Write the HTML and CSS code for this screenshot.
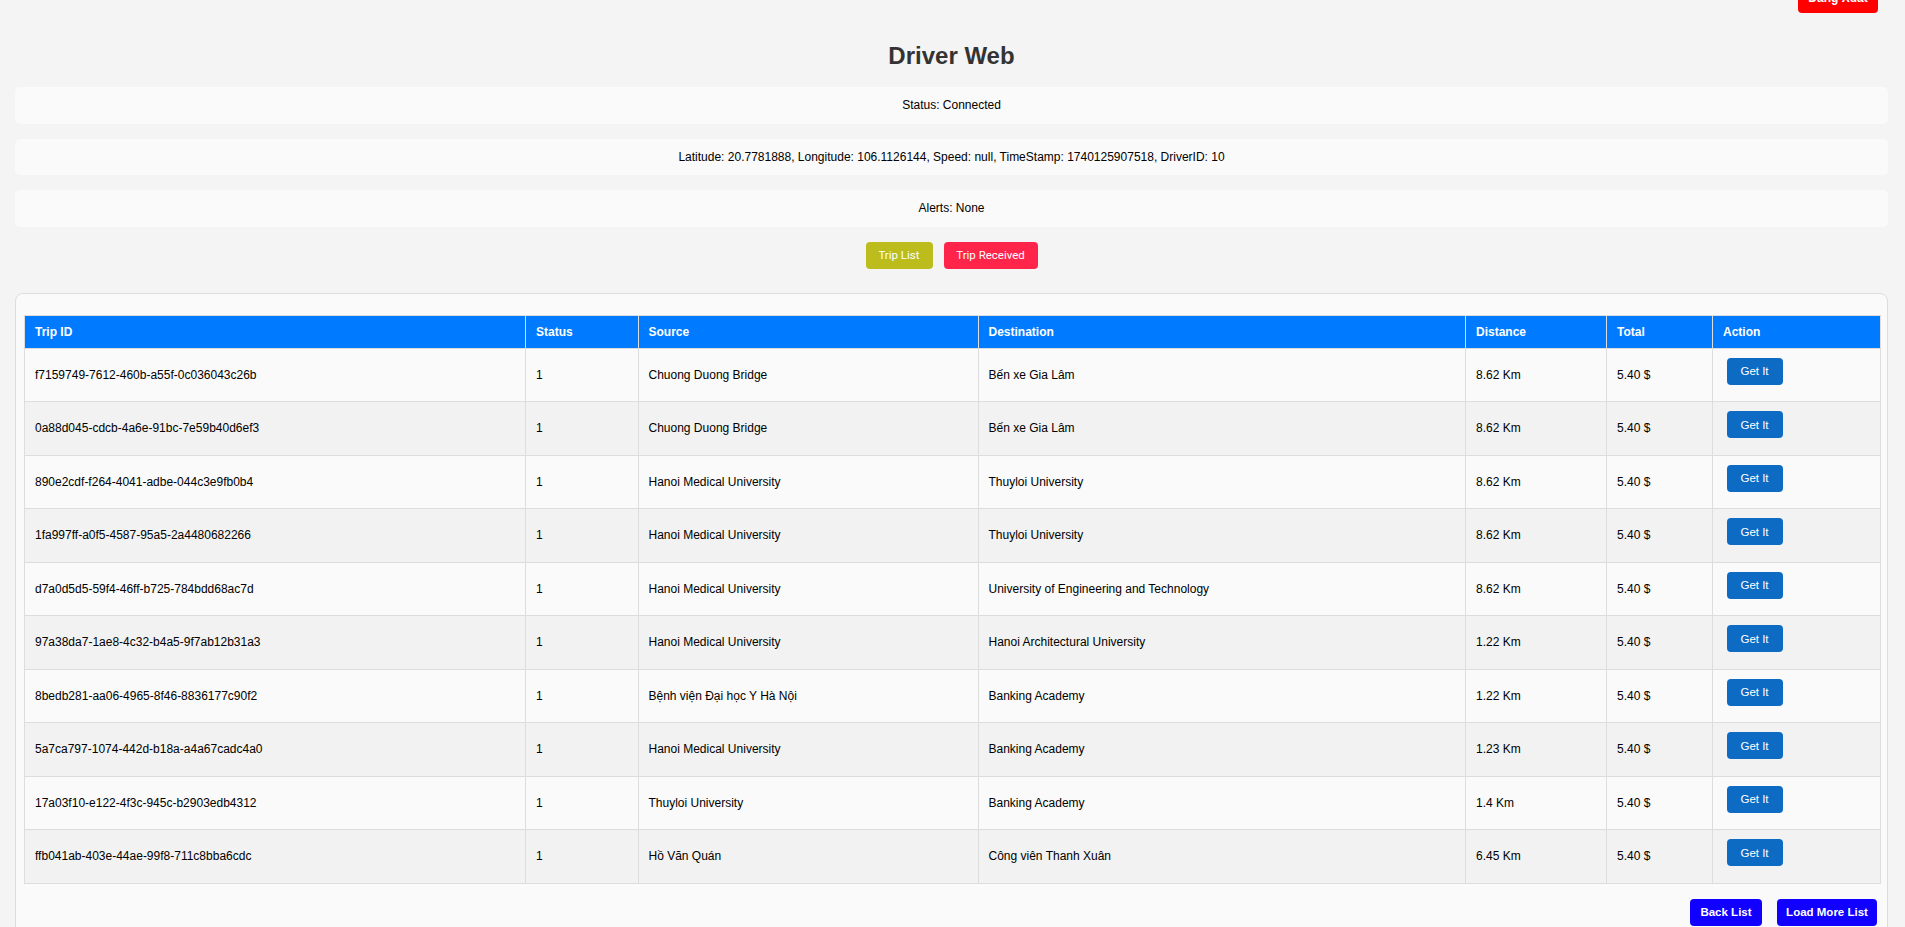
FILE: index.html
```html
<!DOCTYPE html>
<html lang="vi">
<head>
<meta charset="utf-8">
<title>Driver Web</title>
<link rel="stylesheet" href="styles.css">
</head>
<body>
<div class="page">
  <div class="topbar">
    <button class="btn-logout">Đăng Xuất</button>
  </div>
  <h1 class="title">Driver Web</h1>
  <div class="info-box">Status: Connected</div>
  <div class="info-box">Latitude: 20.7781888, Longitude: 106.1126144, Speed: null, TimeStamp: 1740125907518, DriverID: 10</div>
  <div class="info-box">Alerts: None</div>
  <div class="tabs">
    <button class="tab tab-list">Trip List</button>
    <button class="tab tab-received">Trip Received</button>
  </div>
  <div class="card">
    <table class="trips">
      <colgroup>
        <col class="c-id"><col class="c-status"><col class="c-src"><col class="c-dst"><col class="c-dist"><col class="c-total"><col class="c-action">
      </colgroup>
      <thead>
        <tr><th>Trip ID</th><th>Status</th><th>Source</th><th>Destination</th><th>Distance</th><th>Total</th><th>Action</th></tr>
      </thead>
      <tbody>
        <tr><td>f7159749-7612-460b-a55f-0c036043c26b</td><td>1</td><td>Chuong Duong Bridge</td><td>Bến xe Gia Lâm</td><td>8.62 Km</td><td>5.40 $</td><td class="act"><button class="btn-get">Get It</button></td></tr>
        <tr><td>0a88d045-cdcb-4a6e-91bc-7e59b40d6ef3</td><td>1</td><td>Chuong Duong Bridge</td><td>Bến xe Gia Lâm</td><td>8.62 Km</td><td>5.40 $</td><td class="act"><button class="btn-get">Get It</button></td></tr>
        <tr><td>890e2cdf-f264-4041-adbe-044c3e9fb0b4</td><td>1</td><td>Hanoi Medical University</td><td>Thuyloi University</td><td>8.62 Km</td><td>5.40 $</td><td class="act"><button class="btn-get">Get It</button></td></tr>
        <tr><td>1fa997ff-a0f5-4587-95a5-2a4480682266</td><td>1</td><td>Hanoi Medical University</td><td>Thuyloi University</td><td>8.62 Km</td><td>5.40 $</td><td class="act"><button class="btn-get">Get It</button></td></tr>
        <tr><td>d7a0d5d5-59f4-46ff-b725-784bdd68ac7d</td><td>1</td><td>Hanoi Medical University</td><td>University of Engineering and Technology</td><td>8.62 Km</td><td>5.40 $</td><td class="act"><button class="btn-get">Get It</button></td></tr>
        <tr><td>97a38da7-1ae8-4c32-b4a5-9f7ab12b31a3</td><td>1</td><td>Hanoi Medical University</td><td>Hanoi Architectural University</td><td>1.22 Km</td><td>5.40 $</td><td class="act"><button class="btn-get">Get It</button></td></tr>
        <tr><td>8bedb281-aa06-4965-8f46-8836177c90f2</td><td>1</td><td>Bệnh viện Đại học Y Hà Nội</td><td>Banking Academy</td><td>1.22 Km</td><td>5.40 $</td><td class="act"><button class="btn-get">Get It</button></td></tr>
        <tr><td>5a7ca797-1074-442d-b18a-a4a67cadc4a0</td><td>1</td><td>Hanoi Medical University</td><td>Banking Academy</td><td>1.23 Km</td><td>5.40 $</td><td class="act"><button class="btn-get">Get It</button></td></tr>
        <tr><td>17a03f10-e122-4f3c-945c-b2903edb4312</td><td>1</td><td>Thuyloi University</td><td>Banking Academy</td><td>1.4 Km</td><td>5.40 $</td><td class="act"><button class="btn-get">Get It</button></td></tr>
        <tr><td>ffb041ab-403e-44ae-99f8-711c8bba6cdc</td><td>1</td><td>Hồ Văn Quán</td><td>Công viên Thanh Xuân</td><td>6.45 Km</td><td>5.40 $</td><td class="act"><button class="btn-get">Get It</button></td></tr>
      </tbody>
    </table>
    <div class="pager">
      <button class="btn-page">Back List</button>
      <button class="btn-page btn-more">Load More List</button>
    </div>
  </div>
</div>
</body>
</html>
```

FILE: styles.css
```css
* { box-sizing: border-box; }
html, body { margin: 0; padding: 0; }
body {
  background: #f4f4f4;
  font-family: "Liberation Sans", Arial, sans-serif;
  color: #000;
  font-size: 12px;
  overflow: hidden;
}
.page {
  padding: 0 17px 0 15px;
}
.topbar {
  display: flex;
  justify-content: flex-end;
  padding-right: 10px;
  margin-top: -17px;
  height: 30px;
}
.btn-logout {
  width: 80px;
  height: 30px;
  background: #ff0000;
  color: #fff;
  border: none;
  border-radius: 4px;
  font-family: "Liberation Sans", Arial, sans-serif;
  font-size: 12px;
  font-weight: bold;
}
.title {
  margin: 0;
  height: 74px;
  padding-top: 29px;
  text-align: center;
  font-size: 24px;
  font-weight: bold;
  color: #333;
  line-height: 28px;
}
.info-box {
  background: #fafafa;
  border-radius: 5px;
  height: 36.5px;
  line-height: 36.5px;
  text-align: center;
  font-size: 12px;
  margin-bottom: 15px;
}
.tabs {
  display: flex;
  justify-content: center;
  gap: 11px;
  margin-bottom: 24px;
}
.tab {
  height: 27px;
  border: none;
  border-radius: 4px;
  color: #fff;
  font-family: Roboto, "Liberation Sans", sans-serif;
  font-size: 11.5px;
  font-weight: 400;
  padding: 0;
}
.tab-list { width: 67px; background: #bcbc1c; }
.tab-received { width: 94px; background: #ff2449; }
.card {
  background: #fafafa;
  border: 1px solid #dddddd;
  border-radius: 8px;
  padding: 21px 7px 0 8px;
  height: 700px;
}
.trips {
  width: 1855.5px;
  border-collapse: collapse;
  table-layout: fixed;
}
.c-id { width: 501px; }
.c-status { width: 112.5px; }
.c-src { width: 340px; }
.c-dst { width: 487.5px; }
.c-dist { width: 141px; }
.c-total { width: 106px; }
.c-action { width: 167.5px; }
.trips th {
  background: #007bff;
  color: #fff;
  font-weight: bold;
  text-align: left;
  height: 33px;
  padding: 0 10px;
  border: 1px solid #dddddd;
  font-size: 12px;
}
.trips td {
  height: 53.5px;
  padding: 0 10px;
  border: 1px solid #dddddd;
  vertical-align: middle;
  font-size: 12px;
}
.trips tbody tr:nth-child(odd) td { background: #fafafa; }
.trips tbody tr:nth-child(even) td { background: #f2f2f2; }
.trips td.act {
  vertical-align: top;
  padding-top: 9px;
}
.btn-get {
  width: 56px;
  height: 27px;
  margin-left: 3.5px;
  background: #0d6bc4;
  color: #fff;
  border: none;
  border-radius: 4px;
  font-family: "Liberation Sans", Arial, sans-serif;
  font-size: 11.5px;
  padding: 0;
}
.pager {
  display: flex;
  justify-content: flex-end;
  gap: 15px;
  margin-top: 15px;
  padding-right: 3px;
}
.btn-page {
  width: 72px;
  height: 27px;
  background: #1100ff;
  color: #fff;
  border: none;
  border-radius: 4px;
  font-family: "Liberation Sans", Arial, sans-serif;
  font-size: 11.5px;
  font-weight: bold;
  padding: 0;
}
.btn-more { width: 100px; }
```
